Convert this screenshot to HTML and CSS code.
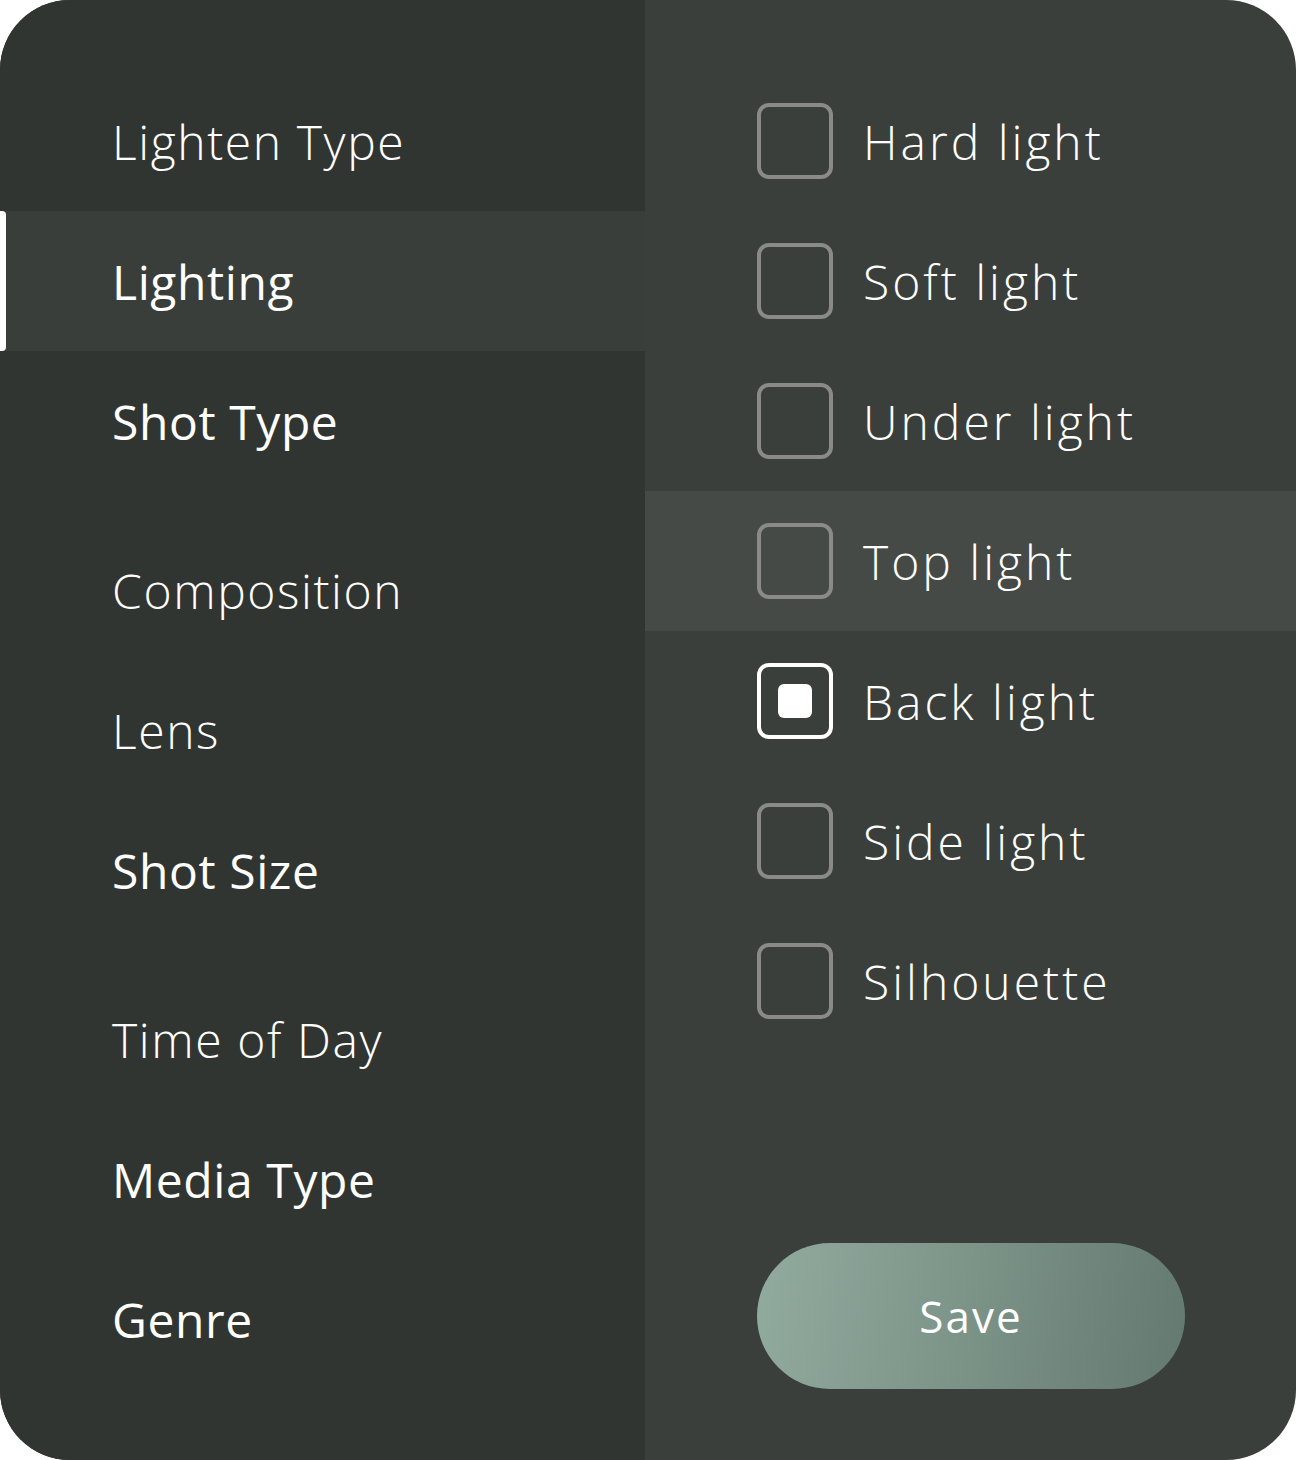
FILE: index.html
```html
<!DOCTYPE html>
<html lang="en">
<head>
<meta charset="utf-8">
<title>Filters</title>
<link rel="stylesheet" href="styles.css">
</head>
<body>
<div class="panel">
  <nav class="nav">
    <div class="nav-item light">Lighten Type</div>
    <div class="nav-item medium active">Lighting</div>
    <div class="nav-item medium">Shot Type</div>
    <div class="nav-item light spaced">Composition</div>
    <div class="nav-item light">Lens</div>
    <div class="nav-item medium">Shot Size</div>
    <div class="nav-item light spaced">Time of Day</div>
    <div class="nav-item medium">Media Type</div>
    <div class="nav-item medium">Genre</div>
  </nav>
  <section class="options">
    <div class="option"><span class="box"></span><span class="label">Hard light</span></div>
    <div class="option"><span class="box"></span><span class="label">Soft light</span></div>
    <div class="option"><span class="box"></span><span class="label">Under light</span></div>
    <div class="option hover"><span class="box"></span><span class="label">Top light</span></div>
    <div class="option"><span class="box checked"></span><span class="label">Back light</span></div>
    <div class="option"><span class="box"></span><span class="label">Side light</span></div>
    <div class="option"><span class="box"></span><span class="label">Silhouette</span></div>
    <div class="actions"><button class="save">Save</button></div>
  </section>
</div>
</body>
</html>
```
FILE: styles.css
```css
* { box-sizing: border-box; }
html, body { margin: 0; padding: 0; background: #ffffff; }
body {
  font-family: "Open Sans", "Liberation Sans", sans-serif;
  color: #ffffff;
}
.panel {
  width: 1296px;
  height: 1460px;
  border-radius: 70px;
  overflow: hidden;
  display: grid;
  grid-template-columns: 645px 1fr;
  background: #3b3f3b;
}
.nav {
  background: #313532;
  padding-top: 71px;
  display: flex;
  flex-direction: column;
}
.nav-item {
  position: relative;
  height: 140px;
  display: flex;
  align-items: center;
  padding-left: 112px;
  font-size: 48px;
  white-space: nowrap;
}
.nav-item.spaced { margin-top: 29px; }
.light { font-weight: 300; letter-spacing: 1.6px; }
.medium { font-weight: 500; letter-spacing: 0.6px; }
.nav-item.active { background: #3a3e3b; }
.nav-item.active::before {
  content: "";
  position: absolute;
  left: 0;
  top: 0;
  width: 6px;
  height: 140px;
  background: #ffffff;
  border-radius: 0 4px 4px 0;
}
.options {
  padding-top: 71px;
  padding-bottom: 71px;
  display: flex;
  flex-direction: column;
}
.option {
  height: 140px;
  display: flex;
  align-items: center;
  padding-left: 112px;
  gap: 30px;
}
.option.hover { background: #464a46; }
.box {
  width: 76px;
  height: 76px;
  border: 4px solid #8a8b89;
  border-radius: 12px;
  flex: none;
  display: flex;
  align-items: center;
  justify-content: center;
}
.box.checked { border-color: #ffffff; }
.box.checked::after {
  content: "";
  width: 34px;
  height: 34px;
  border-radius: 6px;
  background: #ffffff;
}
.label {
  font-size: 48px;
  font-weight: 300;
  letter-spacing: 3px;
  white-space: nowrap;
}
.actions {
  margin-top: auto;
  padding-left: 112px;
}
.save {
  width: 428px;
  height: 146px;
  border: none;
  border-radius: 73px;
  background: linear-gradient(100deg, #92ab9f 0%, #7e958a 45%, #647970 100%);
  color: #ffffff;
  font-family: "Open Sans", "Liberation Sans", sans-serif;
  font-size: 44px;
  font-weight: 400;
  letter-spacing: 2px;
}
```
